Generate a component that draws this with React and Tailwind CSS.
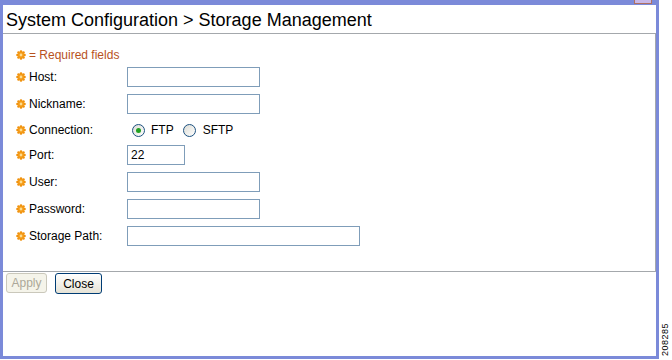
import React from 'react';

const Req = () => (
  <svg width="10" height="10" viewBox="0 0 10 10" className="shrink-0">
    {[0, 45, 90, 135, 180, 225, 270, 315].map((a) => {
      const r = (a * Math.PI) / 180;
      return <circle key={a} cx={5 + Math.cos(r) * 3.5} cy={5 + Math.sin(r) * 3.5} r="1.3" fill="#f0900c" />;
    })}
    <circle cx="5" cy="5" r="3.2" fill="#f49a16" />
    <circle cx="5" cy="5" r="1.4" fill="#fcdc90" />
  </svg>
);

const Field = ({ label, children, className = '' }) => (
  <div className={`flex items-center h-[20px] ${className}`}>
    <div className="w-[111px] flex items-center gap-[3px] text-[12px] text-black">
      <Req />
      <span>{label}</span>
    </div>
    {children}
  </div>
);

const Input = ({ w, value = '' }) => (
  <div className={`${w} h-[20px] border border-[#7f9db9] bg-white text-[12px] leading-[18px] pl-[3px] text-black`}>
    {value}
  </div>
);

const Radio = ({ checked }) => (
  <span className="w-[13px] h-[13px] rounded-full border border-[#1c5180] bg-gradient-to-br from-[#dcdcd5] to-[#ffffff] flex items-center justify-center">
    {checked && <span className="w-[5px] h-[5px] rounded-full bg-[#21a121]" />}
  </span>
);

const App = () => {
  return (
    <div className="w-[672px] h-[360px] bg-white flex font-['Liberation_Sans',Arial,sans-serif]">
      <div className="w-[659px] h-[359px] flex flex-col border-x-[3px] border-b-[3px] border-[#7b8ad9]">
        <div className="h-[5px] bg-[#7b8ad9] relative shrink-0">
          <div className="absolute right-[4px] top-0 w-[18px] h-[4px] border-x border-b border-[#b07060] bg-[#c8b8e8]" />
        </div>
        <div className="h-[29px] shrink-0 border-b border-[#a4a8ac] flex items-center pl-[3px] pt-[2px] text-[18px] text-black">
          System Configuration &gt; Storage Management
        </div>
        <div className="h-[238px] shrink-0 border-b border-r border-[#a4a8ac] pt-[11px] pl-[13px]">
          <div className="flex items-center h-[20px] gap-[3px] text-[12px] text-[#b8521e]">
            <Req />
            <span>= Required fields</span>
          </div>
          <Field label="Host:" className="mt-[2px]"><Input w="w-[133px]" /></Field>
          <Field label="Nickname:" className="mt-[7px]"><Input w="w-[133px]" /></Field>
          <Field label="Connection:" className="mt-[6px]">
            <div className="flex items-center text-[12px] text-black pl-[5px]">
              <Radio checked />
              <span className="ml-[6px]">FTP</span>
              <span className="ml-[9px]"><Radio /></span>
              <span className="ml-[7px]">SFTP</span>
            </div>
          </Field>
          <Field label="Port:" className="mt-[5px]"><Input w="w-[58px]" value="22" /></Field>
          <Field label="User:" className="mt-[7px]"><Input w="w-[133px]" /></Field>
          <Field label="Password:" className="mt-[7px]"><Input w="w-[133px]" /></Field>
          <Field label="Storage Path:" className="mt-[7px]"><Input w="w-[233px]" /></Field>
        </div>
        <div className="flex items-start gap-[8px] pl-[3px] pt-[1px]">
          <button className="w-[41px] h-[20px] rounded-[3px] border border-[#cac8bb] bg-[#f5f4ea] text-[12px] text-[#aca899]">
            Apply
          </button>
          <button className="w-[47px] h-[21px] rounded-[3px] border border-[#003c74] bg-gradient-to-b from-[#ffffff] to-[#e6e3d6] text-[12px] text-black">
            Close
          </button>
        </div>
      </div>
      <div className="flex-1 flex items-end justify-center pb-[4px]">
        <span className="[writing-mode:vertical-rl] rotate-180 text-[9px] leading-none text-black tracking-[0.5px]">
          208285
        </span>
      </div>
    </div>
  );
};

export default App;
